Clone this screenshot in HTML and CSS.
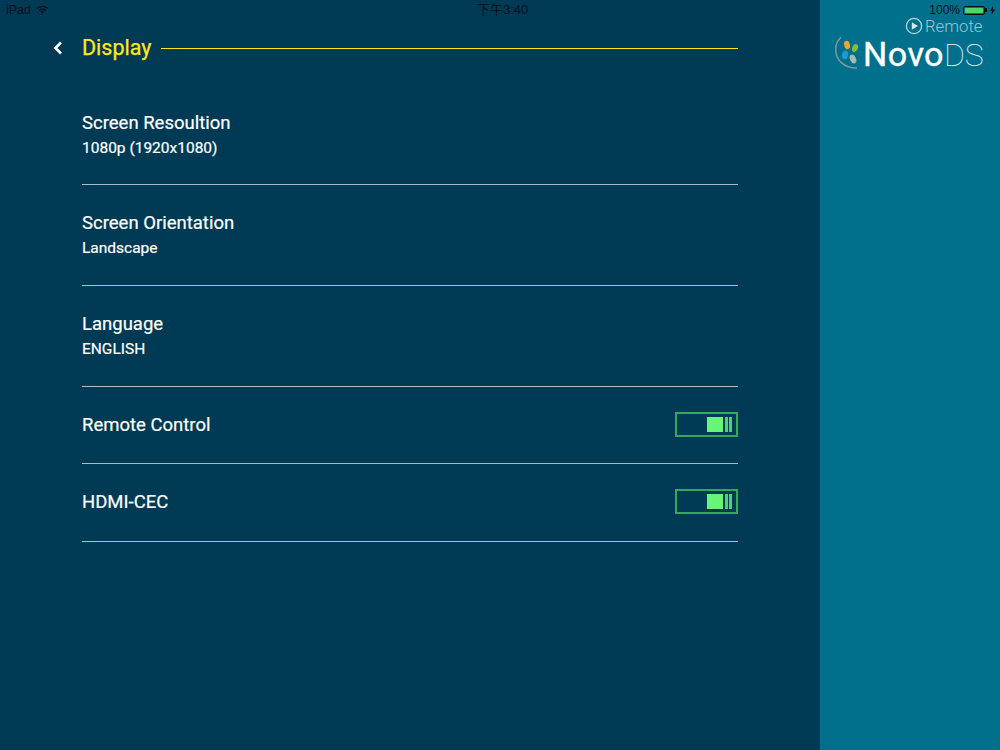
FILE: index.html
```html
<!DOCTYPE html>
<html lang="en">
<head>
<meta charset="utf-8">
<title>Display</title>
<link rel="stylesheet" href="styles.css">
</head>
<body>
<div class="status">
  <div class="status-left">
    <span>iPad</span>
    <svg class="wifi" width="13" height="10" viewBox="0 0 14 10"><path d="M7 9.600 4.900 7.200a3 3 0 0 1 4.200 0Z" fill="#07111a"/><path d="M3.400 5.700a5 5 0 0 1 7.200 0M1.300 3.500a8 8 0 0 1 11.400 0" fill="none" stroke="#07111a" stroke-width="1.500"/></svg>
  </div>
  <div class="status-center">下午3:40</div>
  <div class="status-right">
    <span>100%</span>
    <span class="battery"><span class="battery-fill"></span></span>
    <span class="battery-tip"></span>
    <svg width="5" height="9" viewBox="0 0 5 9"><path d="M3 0 0 5h2L1.500 9 5 3.700H3Z" fill="#07111a"/></svg>
  </div>
</div>
<div class="page">
  <main class="main">
    <header class="header">
      <svg class="back" width="10" height="14" viewBox="0 0 10 14"><path d="M8 1.500 2.500 7 8 12.500" fill="none" stroke="#fff" stroke-width="2.600"/></svg>
      <h1 class="title">Display</h1>
      <span class="title-rule"></span>
    </header>
    <section class="list">
      <div class="row row-tall">
        <div class="label">Screen Resoultion</div>
        <div class="value">1080p (1920x1080)</div>
      </div>
      <div class="row row-tall">
        <div class="label">Screen Orientation</div>
        <div class="value">Landscape</div>
      </div>
      <div class="row row-tall">
        <div class="label">Language</div>
        <div class="value">ENGLISH</div>
      </div>
      <div class="row row-toggle">
        <div class="label">Remote Control</div>
        <div class="toggle"><span class="knob"></span><span class="bar"></span><span class="bar"></span></div>
      </div>
      <div class="row row-toggle row-last">
        <div class="label">HDMI-CEC</div>
        <div class="toggle"><span class="knob"></span><span class="bar"></span><span class="bar"></span></div>
      </div>
    </section>
  </main>
  <aside class="side">
    <div class="remote">
      <svg width="18" height="18" viewBox="0 0 18 18"><circle cx="9" cy="9" r="7.600" fill="none" stroke="#b5d6de" stroke-width="1.300"/><path d="M6.800 5.200 13 9l-6.200 3.800Z" fill="#d6e8ec"/></svg>
      <span>Remote</span>
    </div>
    <div class="logo">
      <svg class="logo-mark" width="28" height="34" viewBox="0 0 28 34">
        <path d="M6 .5C2 3.500.5 8 .8 14c.4 9 8 17 21.200 17" fill="none" stroke="#7d98a2" stroke-width="1.500"/>
        <ellipse cx="12" cy="8" rx="2.900" ry="4.200" fill="#f0a531" transform="rotate(-15 12 8)"/>
        <ellipse cx="20" cy="11" rx="2.800" ry="4" fill="#86bd3c" transform="rotate(25 20 11)"/>
        <ellipse cx="10" cy="18" rx="3" ry="4.200" fill="#1d9ad6" transform="rotate(10 10 18)"/>
        <ellipse cx="18" cy="22" rx="3" ry="4.600" fill="#a9b4b6" transform="rotate(-25 18 22)"/>
      </svg>
      <span class="logo-text"><span class="logo-novo">Novo</span><span class="logo-ds">DS</span></span>
    </div>
  </aside>
</div>
</body>
</html>
```
FILE: styles.css
```css
* { box-sizing: border-box; }
html, body { margin: 0; height: 100%; }
body { font-family: Roboto, "Noto Sans CJK SC", sans-serif; color: #fff; background: #003a54; overflow: hidden; }

.page { display: flex; width: 1000px; height: 750px; }
.main { width: 820px; background: #003a54; padding-left: 82px; padding-right: 82px; }
.side { width: 180px; background: #00708c; padding-top: 16px; }

.status { position: absolute; top: 0; left: 0; width: 1000px; height: 20px; font-family: "Liberation Sans", "Noto Sans CJK SC", sans-serif; font-size: 12.500px; color: #07111a; }
.status-left { position: absolute; left: 6px; top: 3px; display: flex; align-items: center; gap: 5px; height: 14px; }
.status-center { position: absolute; left: 477px; top: 3px; height: 14px; line-height: 14px; font-size: 13px; }
.status-right { position: absolute; right: 5px; top: 3px; height: 14px; display: flex; align-items: center; font-size: 12px; }
.battery { width: 22px; height: 9px; border: 1px solid #07111a; border-radius: 2px; margin-left: 3px; padding: 1px; display: block; }
.battery-fill { display: block; height: 100%; background: #4cd964; border-radius: 1px; }
.battery-tip { width: 2px; height: 4px; background: #07111a; margin-right: 3px; }

.header { display: flex; align-items: center; height: 32px; margin-top: 32px; position: relative; }
.back { position: absolute; left: -29px; top: 9px; }
.title { margin: 0; font-size: 21.500px; font-weight: 400; color: #ffe81a; line-height: 32px; -webkit-text-stroke: .25px #ffe81a; }
.title-rule { flex: 1; height: 1px; background: #ffe81a; margin-left: 10px; }

.list { display: flex; flex-direction: column; margin-top: 21px; }
.row { border-bottom: 1px solid #a9bfc6; }
.row-tall { height: 101px; padding-top: 26px; }
.row-tall:first-child { height: 100px; }
.row-toggle { height: 77px; display: flex; align-items: center; justify-content: space-between; padding-bottom: 2px; }
.row-toggle .label { margin-top: 1px; }
.row-last { height: 78px; }
.label { font-size: 18.500px; font-weight: 400; line-height: 24px; -webkit-text-stroke: .2px #fff; }
.value { font-size: 15.500px; font-weight: 400; line-height: 20px; margin-top: 3px; -webkit-text-stroke: .2px #fff; }

.toggle { width: 63px; height: 25px; border: 2px solid #36a85a; display: flex; align-items: center; justify-content: flex-end; gap: 1px; padding-right: 4px; }
.knob { width: 16px; height: 15px; background: #66f57a; margin-right: 1px; }
.bar { width: 3px; height: 15px; background: #66f57a; opacity: .8; }

.remote { display: flex; align-items: center; gap: 2px; padding-left: 85px; height: 20px; color: #9cc6d1; font-size: 16.700px; font-weight: 300; }
.logo { display: flex; align-items: center; gap: 0; padding-left: 15px; height: 36px; }
.logo-text { font-size: 34px; line-height: 36px; }
.logo-novo { font-weight: 400; color: #fff; letter-spacing: .5px; -webkit-text-stroke: .4px #fff; }
.logo-ds { font-weight: 100; color: #e6f2f5; font-size: 32px; letter-spacing: -.2px; }
```
